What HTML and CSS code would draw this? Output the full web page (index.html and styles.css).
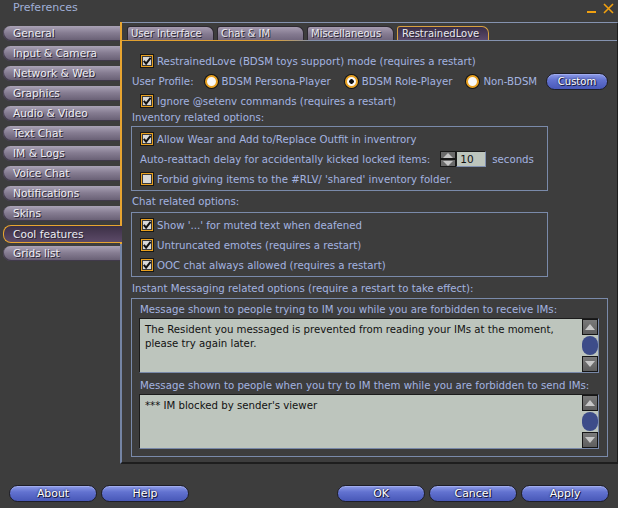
FILE: index.html
```html
<!DOCTYPE html>
<html>
<head>
<meta charset="utf-8">
<title>Preferences</title>
<link rel="stylesheet" href="styles.css">
</head>
<body>
<div class="window">
  <div class="titlebar">
    <span class="title">Preferences</span>
    <span class="winctl">
      <svg class="wmin" width="10" height="11" viewBox="0 0 10 11"><rect x="0" y="8" width="9" height="2" fill="#f0a010"/></svg>
      <svg class="wclose" width="11" height="11" viewBox="0 0 11 11"><path d="M1 1 L10 10 M10 1 L1 10" stroke="#f0a010" stroke-width="1.6" fill="none"/></svg>
    </span>
  </div>
  <div class="main">
    <nav class="sidebar">
      <div class="stab">General</div>
      <div class="stab">Input &amp; Camera</div>
      <div class="stab">Network &amp; Web</div>
      <div class="stab">Graphics</div>
      <div class="stab">Audio &amp; Video</div>
      <div class="stab">Text Chat</div>
      <div class="stab">IM &amp; Logs</div>
      <div class="stab">Voice Chat</div>
      <div class="stab">Notifications</div>
      <div class="stab">Skins</div>
      <div class="stab sel">Cool features</div>
      <div class="stab">Grids list</div>
    </nav>
    <section class="panel">
      <div class="tabs">
        <div class="tab">User Interface</div>
        <div class="tab">Chat &amp; IM</div>
        <div class="tab">Miscellaneous</div>
        <div class="tab sel">RestrainedLove</div>
      </div>
      <div class="content">
        <div class="row cbrow"><span class="cb on"><svg viewBox="0 0 10 10" width="10" height="10"><path d="M1.8 4.8 L4.1 7.6 L8.6 1.8" stroke="#111" stroke-width="2" fill="none"/></svg></span>RestrainedLove (BDSM toys support) mode (requires a restart)</div>
        <div class="row profile">
          <span class="plabel">User Profile:</span>
          <span class="radio r1"></span><span class="rtext">BDSM Persona-Player</span>
          <span class="radio r2 on"></span><span class="rtext">BDSM Role-Player</span>
          <span class="radio r3"></span><span class="rtext">Non-BDSM</span>
          <button class="btn custom">Custom</button>
        </div>
        <div class="row cbrow"><span class="cb on"><svg viewBox="0 0 10 10" width="10" height="10"><path d="M1.8 4.8 L4.1 7.6 L8.6 1.8" stroke="#111" stroke-width="2" fill="none"/></svg></span>Ignore @setenv commands (requires a restart)</div>
        <div class="seclabel lbl-inv">Inventory related options:</div>
        <div class="box">
          <div class="row"><span class="cb on"><svg viewBox="0 0 10 10" width="10" height="10"><path d="M1.8 4.8 L4.1 7.6 L8.6 1.8" stroke="#111" stroke-width="2" fill="none"/></svg></span>Allow Wear and Add to/Replace Outfit in inventrory</div>
          <div class="row delay">
            <span class="dtext">Auto-reattach delay for accidentally kicked locked items:</span>
            <span class="spin">
              <span class="sp up"><svg width="10" height="5" viewBox="0 0 10 5"><polygon points="0,5 5,0 10,5" fill="#c4c4c4"/></svg></span>
              <span class="sp down"><svg width="10" height="5" viewBox="0 0 10 5"><polygon points="0,0 10,0 5,5" fill="#c4c4c4"/></svg></span>
            </span>
            <span class="num">10</span>
            <span class="secs">seconds</span>
          </div>
          <div class="row"><span class="cb"></span>Forbid giving items to the #RLV/ 'shared' inventory folder.</div>
        </div>
        <div class="seclabel lbl-chat">Chat related options:</div>
        <div class="box">
          <div class="row"><span class="cb on"><svg viewBox="0 0 10 10" width="10" height="10"><path d="M1.8 4.8 L4.1 7.6 L8.6 1.8" stroke="#111" stroke-width="2" fill="none"/></svg></span>Show '...' for muted text when deafened</div>
          <div class="row"><span class="cb on"><svg viewBox="0 0 10 10" width="10" height="10"><path d="M1.8 4.8 L4.1 7.6 L8.6 1.8" stroke="#111" stroke-width="2" fill="none"/></svg></span>Untruncated emotes (requires a restart)</div>
          <div class="row"><span class="cb on"><svg viewBox="0 0 10 10" width="10" height="10"><path d="M1.8 4.8 L4.1 7.6 L8.6 1.8" stroke="#111" stroke-width="2" fill="none"/></svg></span>OOC chat always allowed (requires a restart)</div>
        </div>
        <div class="seclabel lbl-im">Instant Messaging related options (require a restart to take effect):</div>
        <div class="box box3">
          <div class="talabel">Message shown to people trying to IM you while you are forbidden to receive IMs:</div>
          <div class="ta">
            <div class="ta-text">The Resident you messaged is prevented from reading your IMs at the moment,<br>please try again later.</div>
            <div class="sb">
              <span class="sbb"><svg width="10" height="6" viewBox="0 0 10 6"><polygon points="0,6 5,0 10,6" fill="#c8c8c8"/></svg></span>
              <span class="thumb"></span>
              <span class="sbb"><svg width="10" height="6" viewBox="0 0 10 6"><polygon points="0,0 10,0 5,6" fill="#c8c8c8"/></svg></span>
            </div>
          </div>
          <div class="talabel second">Message shown to people when you try to IM them while you are forbidden to send IMs:</div>
          <div class="ta">
            <div class="ta-text">*** IM blocked by sender's viewer</div>
            <div class="sb">
              <span class="sbb"><svg width="10" height="6" viewBox="0 0 10 6"><polygon points="0,6 5,0 10,6" fill="#c8c8c8"/></svg></span>
              <span class="thumb"></span>
              <span class="sbb"><svg width="10" height="6" viewBox="0 0 10 6"><polygon points="0,0 10,0 5,6" fill="#c8c8c8"/></svg></span>
            </div>
          </div>
        </div>
      </div>
    </section>
  </div>
  <div class="footer">
    <button class="btn">About</button>
    <button class="btn">Help</button>
    <button class="btn push">OK</button>
    <button class="btn">Cancel</button>
    <button class="btn">Apply</button>
  </div>
</div>
</body>
</html>
```

FILE: styles.css
```css
* { box-sizing: border-box; }
html, body { margin: 0; padding: 0; }
body {
  width: 618px;
  height: 508px;
  overflow: hidden;
  background: #3d3d3d;
  font-family: "DejaVu Sans", "Liberation Sans", sans-serif;
  font-size: 10.2px;
  color: #a4b4e0;
}
.window {
  width: 618px;
  height: 508px;
  display: flex;
  flex-direction: column;
  background: #3d3d3d;
}
.titlebar {
  height: 22px;
  display: flex;
  justify-content: space-between;
  align-items: flex-start;
}
.title {
  height: 16px;
  line-height: 15px;
  padding-left: 13px;
  font-size: 11px;
  color: #a0b0d8;
}
.winctl {
  display: flex;
  gap: 6px;
  padding: 3px 4px 0 0;
}
.main {
  height: 442px;
  display: flex;
}
.sidebar {
  width: 120px;
  flex: none;
  padding: 4px 0 0 3px;
  display: flex;
  flex-direction: column;
}
.stab {
  height: 15px;
  margin-bottom: 5px;
  border-radius: 8px 0 0 8px;
  background: linear-gradient(#aaa2b6, #867d92 45%, #665d72);
  box-shadow: inset 1px -1px 0 rgba(40, 34, 48, 0.6);
  line-height: 15px;
  padding-left: 10px;
  font-size: 10.6px;
  color: #ececf2;
  text-shadow: 1px 1px 0 #2a2430;
  white-space: nowrap;
}
.stab.sel {
  height: 18px;
  margin-top: -1px;
  margin-bottom: 3px;
  margin-right: -2px;
  border: 1px solid #e8a530;
  border-right: none;
  background: linear-gradient(#3c3046, #5c4a68);
  box-shadow: none;
  line-height: 16px;
  padding-left: 9px;
  position: relative;
  z-index: 2;
}
.panel {
  flex: 1;
  position: relative;
  border-left: 2px solid #7585a5;
  border-top: 1px solid #8593b0;
  border-right: 2px solid #1e1e1e;
  border-bottom: 2px solid #1e1e1e;
  display: flex;
  flex-direction: column;
}
.panel::before {
  content: "";
  position: absolute;
  left: -2px;
  top: -1px;
  width: 2px;
  height: 222px;
  background: #e8a530;
}
.tabs {
  display: flex;
  margin-top: 3px;
  height: 15px;
  padding-left: 5px;
  padding-bottom: 1px;
  background: linear-gradient(to right, #e0a030 0, #e0a030 150px, #8593b0 190px) left bottom / 100% 1px no-repeat;
}
.tab {
  width: 87px;
  height: 14px;
  margin-right: 3px;
  border-radius: 3px 7px 0 0;
  background: linear-gradient(#a69cb0, #847a90 55%, #71677e);
  border: 1px solid #2c2830;
  border-bottom: none;
  padding-left: 3px;
  line-height: 13px;
  font-size: 10px;
  color: #e8e8ee;
  text-shadow: 1px 1px 0 #2a2430;
  white-space: nowrap;
}
.tab.sel {
  width: 92px;
  border-color: #d8a040;
  background: linear-gradient(#3a2e46, #5c4a6c);
  padding-left: 4px;
}
.content {
  padding: 10px 9px 0 10px;
  display: flex;
  flex-direction: column;
}
.row {
  height: 20px;
  display: flex;
  align-items: center;
  white-space: nowrap;
}
.cbrow { padding-left: 9px; }
.cb {
  width: 12px;
  height: 12px;
  flex: none;
  margin-right: 4px;
  border: 1px solid #e8a020;
  box-shadow: 0 0 0 1px #161616, inset 0 0 0 1px #3a3a3a;
  background: #d8d8d8;
  display: flex;
  align-items: center;
  justify-content: center;
}
.cb svg { display: block; }
.plabel { margin-right: 11px; }
.radio {
  width: 13px;
  height: 13px;
  flex: none;
  border-radius: 50%;
  border: 2px solid #e8a020;
  box-shadow: 0 0 0 1px #141414;
  background: #f8f8f8;
  margin-right: 4px;
}
.radio.on {
  background: radial-gradient(circle, #111 0, #111 2px, #f8f8f8 2.6px);
}
.r2, .r3 { margin-left: 14px; }
.seclabel {
  height: 14px;
  line-height: 14px;
  white-space: nowrap;
}
.lbl-inv { margin-bottom: 1px; }
.lbl-chat { margin-top: 4px; margin-bottom: 3px; }
.lbl-im { margin-top: 5px; margin-bottom: 2px; }
.box {
  width: 417px;
  margin-left: -1px;
  border: 1px solid #7a8aaa;
  padding: 2px 0 1px 9px;
}
.dtext { margin-left: -1px; }
.spin {
  width: 16px;
  height: 16px;
  margin-left: 10px;
  display: flex;
  flex-direction: column;
}
.sp {
  height: 8px;
  background: #6a6a6a;
  border: 1px solid #181818;
  display: flex;
  align-items: center;
  justify-content: center;
}
.sp svg { display: block; }
.num {
  width: 30px;
  height: 16px;
  background: #bdc5bd;
  border-top: 1px solid #1c1c1c;
  border-left: 1px solid #1c1c1c;
  border-right: 1px solid #8090b0;
  border-bottom: 1px solid #8090b0;
  color: #111;
  padding-left: 3px;
  line-height: 14px;
  font-size: 10.5px;
}
.secs { margin-left: 6px; }
.box3 {
  width: 477px;
  padding: 3px 8px 7px 7px;
}
.talabel {
  height: 16px;
  line-height: 16px;
  padding-left: 1px;
  white-space: nowrap;
}
.talabel.second { margin-top: 5px; }
.ta {
  height: 55px;
  display: flex;
  background: #bdc5bd;
  border-top: 1px solid #1c1c1c;
  border-left: 1px solid #1c1c1c;
  border-right: 1px solid #7888a8;
  border-bottom: 1px solid #7888a8;
}
.ta-text {
  flex: 1;
  padding: 4px 5px;
  line-height: 14px;
  color: #111;
  white-space: nowrap;
}
.sb {
  width: 16px;
  display: flex;
  flex-direction: column;
}
.sbb {
  height: 16px;
  background: linear-gradient(#7a7a7a, #5e5e5e);
  border: 1px solid #161616;
  display: flex;
  align-items: center;
  justify-content: center;
}
.sbb svg { display: block; }
.thumb {
  flex: 1;
  margin: 1px 0;
  border-radius: 8px;
  background: #3d4c89;
}
.footer {
  height: 44px;
  display: flex;
  gap: 4px;
  padding: 21px 9px 0 9px;
}
.push { margin-left: auto; }
.btn {
  width: 88px;
  height: 17px;
  padding: 0;
  border-radius: 9px;
  border: 1px solid #1e1e28;
  background: linear-gradient(#8e9ce8, #6272d0 40%, #4858b8);
  box-shadow: inset 0 1px 0 rgba(200, 210, 255, 0.35);
  color: #ffffff;
  font-family: "DejaVu Sans", "Liberation Sans", sans-serif;
  font-size: 10.9px;
  line-height: 15px;
  text-shadow: 0 0 2px #10102a, 1px 1px 0 #1a1a40;
}
.btn.custom {
  margin-left: auto;
  width: 62px;
  font-size: 10px;
}
```
